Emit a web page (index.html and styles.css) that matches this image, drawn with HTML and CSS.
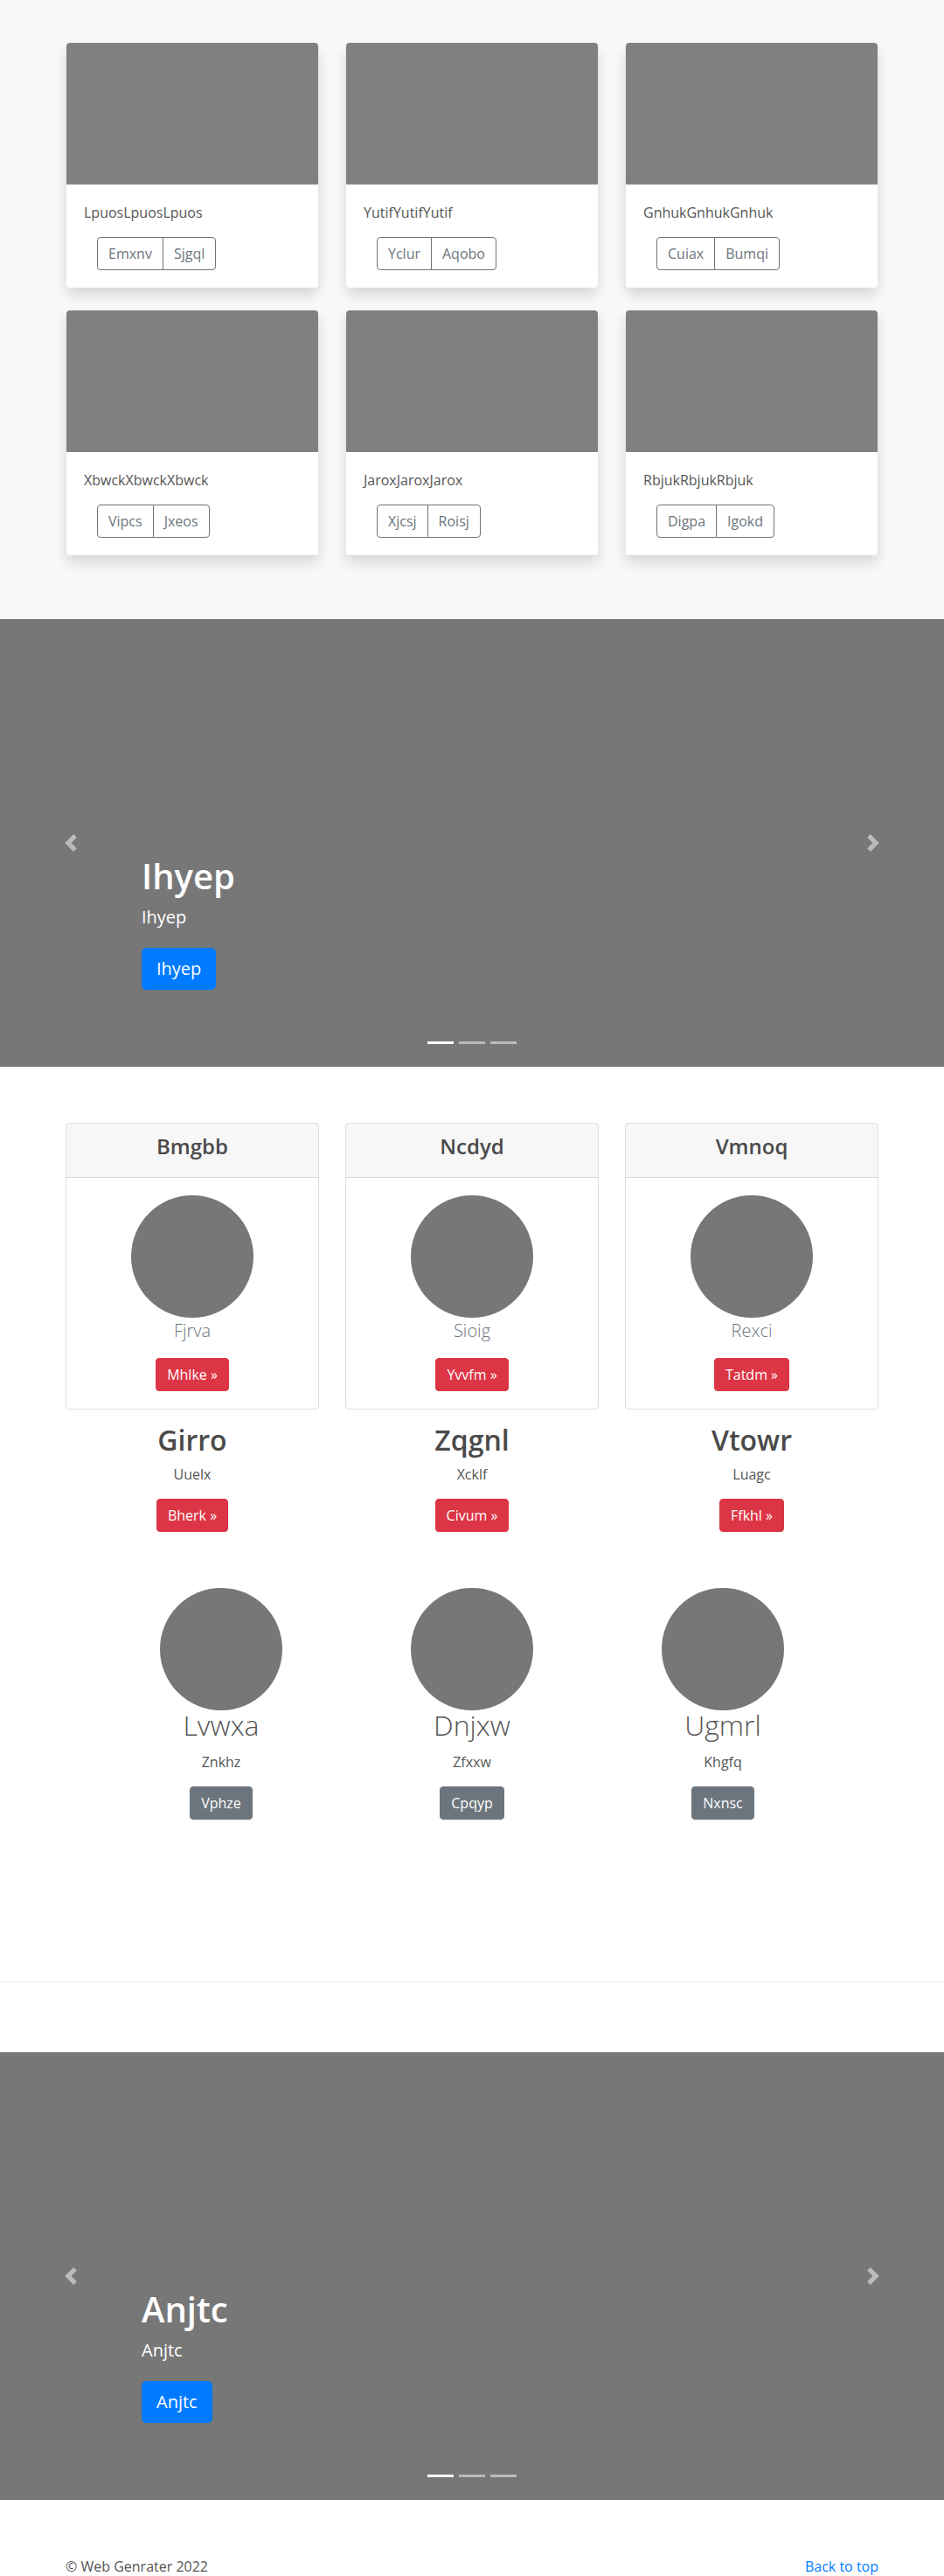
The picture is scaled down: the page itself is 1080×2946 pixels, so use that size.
FILE: index.html
```html
<!DOCTYPE html>
<html lang="en">
<head>
<meta charset="utf-8">
<title>Web Genrater</title>
<link rel="stylesheet" href="styles.css">
</head>
<body>
<main>
  <section class="album">
    <div class="container album-grid">
      <div class="card">
        <div class="card-img"></div>
        <div class="card-body">
          <p class="card-text">LpuosLpuosLpuos</p>
          <div class="btn-group"><a class="btn btn-outline">Emxnv</a><a class="btn btn-outline">Sjgql</a></div>
        </div>
      </div>
      <div class="card">
        <div class="card-img"></div>
        <div class="card-body">
          <p class="card-text">YutifYutifYutif</p>
          <div class="btn-group"><a class="btn btn-outline">Yclur</a><a class="btn btn-outline">Aqobo</a></div>
        </div>
      </div>
      <div class="card">
        <div class="card-img"></div>
        <div class="card-body">
          <p class="card-text">GnhukGnhukGnhuk</p>
          <div class="btn-group"><a class="btn btn-outline">Cuiax</a><a class="btn btn-outline">Bumqi</a></div>
        </div>
      </div>
      <div class="card">
        <div class="card-img"></div>
        <div class="card-body">
          <p class="card-text">XbwckXbwckXbwck</p>
          <div class="btn-group"><a class="btn btn-outline">Vipcs</a><a class="btn btn-outline">Jxeos</a></div>
        </div>
      </div>
      <div class="card">
        <div class="card-img"></div>
        <div class="card-body">
          <p class="card-text">JaroxJaroxJarox</p>
          <div class="btn-group"><a class="btn btn-outline">Xjcsj</a><a class="btn btn-outline">Roisj</a></div>
        </div>
      </div>
      <div class="card">
        <div class="card-img"></div>
        <div class="card-body">
          <p class="card-text">RbjukRbjukRbjuk</p>
          <div class="btn-group"><a class="btn btn-outline">Digpa</a><a class="btn btn-outline">Igokd</a></div>
        </div>
      </div>
    </div>
  </section>

  <section class="carousel">
    <div class="caption">
      <h1 class="caption-title">Ihyep</h1>
      <p class="caption-sub">Ihyep</p>
      <div class="caption-action"><a class="btn btn-lg btn-primary">Ihyep</a></div>
    </div>
    <a class="ctrl ctrl-prev"><svg width="20" height="20" viewBox="0 0 8 8"><path fill="#fff" d="M5.25 0l-4 4 4 4 1.5-1.5L4.25 4l2.5-2.5L5.25 0z"/></svg></a>
    <a class="ctrl ctrl-next"><svg width="20" height="20" viewBox="0 0 8 8"><path fill="#fff" d="M2.75 0l-1.5 1.5L3.75 4l-2.5 2.5L2.75 8l4-4-4-4z"/></svg></a>
    <ol class="indicators"><li class="active"></li><li></li><li></li></ol>
  </section>

  <section class="container pricing">
    <div class="pricing-col">
      <div class="pcard">
        <div class="pcard-header"><h4 class="pcard-title">Bmgbb</h4></div>
        <div class="pcard-body">
          <div class="circle"></div>
          <p class="lead">Fjrva</p>
          <a class="btn btn-danger">Mhlke »</a>
        </div>
      </div>
      <h2 class="feature-title">Girro</h2>
      <p class="feature-text">Uuelx</p>
      <a class="btn btn-danger">Bherk »</a>
    </div>
    <div class="pricing-col">
      <div class="pcard">
        <div class="pcard-header"><h4 class="pcard-title">Ncdyd</h4></div>
        <div class="pcard-body">
          <div class="circle"></div>
          <p class="lead">Sioig</p>
          <a class="btn btn-danger">Yvvfm »</a>
        </div>
      </div>
      <h2 class="feature-title">Zqgnl</h2>
      <p class="feature-text">Xcklf</p>
      <a class="btn btn-danger">Civum »</a>
    </div>
    <div class="pricing-col">
      <div class="pcard">
        <div class="pcard-header"><h4 class="pcard-title">Vmnoq</h4></div>
        <div class="pcard-body">
          <div class="circle"></div>
          <p class="lead">Rexci</p>
          <a class="btn btn-danger">Tatdm »</a>
        </div>
      </div>
      <h2 class="feature-title">Vtowr</h2>
      <p class="feature-text">Luagc</p>
      <a class="btn btn-danger">Ffkhl »</a>
    </div>
  </section>

  <section class="marketing">
    <div class="mk-col">
      <div class="circle"></div>
      <h2 class="mk-title">Lvwxa</h2>
      <p class="mk-text">Znkhz</p>
      <a class="btn btn-secondary">Vphze</a>
    </div>
    <div class="mk-col">
      <div class="circle"></div>
      <h2 class="mk-title">Dnjxw</h2>
      <p class="mk-text">Zfxxw</p>
      <a class="btn btn-secondary">Cpqyp</a>
    </div>
    <div class="mk-col">
      <div class="circle"></div>
      <h2 class="mk-title">Ugmrl</h2>
      <p class="mk-text">Khgfq</p>
      <a class="btn btn-secondary">Nxnsc</a>
    </div>
  </section>

  <hr class="divider">

  <section class="carousel">
    <div class="caption">
      <h1 class="caption-title">Anjtc</h1>
      <p class="caption-sub">Anjtc</p>
      <div class="caption-action"><a class="btn btn-lg btn-primary">Anjtc</a></div>
    </div>
    <a class="ctrl ctrl-prev"><svg width="20" height="20" viewBox="0 0 8 8"><path fill="#fff" d="M5.25 0l-4 4 4 4 1.5-1.5L4.25 4l2.5-2.5L5.25 0z"/></svg></a>
    <a class="ctrl ctrl-next"><svg width="20" height="20" viewBox="0 0 8 8"><path fill="#fff" d="M2.75 0l-1.5 1.5L3.75 4l-2.5 2.5L2.75 8l4-4-4-4z"/></svg></a>
    <ol class="indicators"><li class="active"></li><li></li><li></li></ol>
  </section>
</main>

<footer class="container footer">
  <p class="copy">© Web Genrater 2022</p>
  <a class="back" href="#">Back to top</a>
</footer>
</body>
</html>
```

FILE: styles.css
```css
* { box-sizing: border-box; }

html, body {
  margin: 0;
  padding: 0;
}

body {
  font-family: "Segoe UI", "Open Sans", "Noto Sans", sans-serif;
  font-size: 16px;
  line-height: 1.5;
  color: #555;
  background: #fff;
}

p { margin: 0; }
h1, h2, h4 { margin: 0; }

.container {
  width: 960px;
  margin: 0 auto;
}

/* ---------- buttons ---------- */
.btn {
  display: inline-block;
  font-size: 16px;
  line-height: 24px;
  padding: 6px 12px;
  border: 1px solid transparent;
  border-radius: 4px;
  text-decoration: none;
  text-align: center;
  white-space: nowrap;
  cursor: pointer;
}
.btn-lg {
  font-size: 20px;
  line-height: 30px;
  padding: 8px 16px;
  border-radius: 5px;
}
.btn-primary { background: #007bff; border-color: #007bff; color: #fff; }
.btn-danger { background: #dc3545; border-color: #dc3545; color: #fff; }
.btn-secondary { background: #6c757d; border-color: #6c757d; color: #fff; }
.btn-outline { color: #6c757d; border-color: #6c757d; background: transparent; }

.btn-group { display: inline-flex; margin-left: 15px; }
.btn-group .btn { border-radius: 0; }
.btn-group .btn:first-child { border-radius: 4px 0 0 4px; }
.btn-group .btn:last-child { border-radius: 0 4px 4px 0; margin-left: -1px; }

/* ---------- album ---------- */
.album {
  background: #f8f9fa;
  padding: 49px 0 73px;
}
.album-grid {
  display: grid;
  grid-template-columns: repeat(3, 320px);
  justify-items: center;
  row-gap: 26px;
}
.card {
  width: 288px;
  background: #fff;
  border-radius: 4px;
  overflow: hidden;
  box-shadow: 0 8px 16px rgba(0, 0, 0, 0.15);
}
.card-img {
  height: 162px;
  background: #808080;
}
.card-body { padding: 20px; }
.card-text { margin-bottom: 16px; }

/* ---------- carousel ---------- */
.carousel {
  position: relative;
  height: 512px;
  background: #777;
  display: flex;
  align-items: flex-end;
  padding: 0 15% 88px 15%;
  color: #fff;
}
.caption { display: flex; flex-direction: column; align-items: flex-start; }
.caption-title {
  font-size: 40px;
  line-height: 48px;
  font-weight: 600;
  margin-bottom: 8px;
}
.caption-sub {
  font-size: 20px;
  line-height: 30px;
  margin-bottom: 20px;
}
.caption-action { display: flex; }

.ctrl {
  position: absolute;
  top: 0;
  bottom: 0;
  width: 15%;
  display: flex;
  align-items: center;
  justify-content: center;
  opacity: 0.5;
}
.ctrl svg { display: block; }
.ctrl-prev { left: 0; }
.ctrl-next { right: 0; }

.indicators {
  position: absolute;
  left: 0;
  right: 0;
  bottom: 16px;
  margin: 0;
  padding: 0;
  list-style: none;
  display: flex;
  justify-content: center;
}
.indicators li {
  width: 30px;
  height: 23px;
  margin: 0 3px;
  border-top: 10px solid transparent;
  border-bottom: 10px solid transparent;
  background: #fff;
  background-clip: padding-box;
  opacity: 0.5;
}
.indicators li.active { opacity: 1; }

/* ---------- pricing ---------- */
.pricing {
  margin-top: 64px;
  display: grid;
  grid-template-columns: repeat(3, 320px);
}
.pricing-col {
  padding: 0 15px;
  text-align: center;
}
.pcard {
  border: 1px solid rgba(0, 0, 0, 0.125);
  border-radius: 4px;
  overflow: hidden;
  background: #fff;
  margin-bottom: 16px;
}
.pcard-header {
  background: rgba(0, 0, 0, 0.03);
  border-bottom: 1px solid rgba(0, 0, 0, 0.125);
  padding: 12px 20px;
}
.pcard-title {
  font-size: 24px;
  line-height: 28.8px;
  font-weight: 600;
  margin-bottom: 8px;
  color: #4a4a4a;
}
.pcard-body { padding: 20px; }
.circle {
  width: 140px;
  height: 140px;
  border-radius: 50%;
  background: #777;
  margin: 0 auto;
}
.lead {
  font-size: 20px;
  line-height: 30px;
  font-weight: 300;
  color: #6c757d;
  margin-bottom: 16px;
}
.feature-title {
  font-size: 32px;
  line-height: 38.4px;
  font-weight: 600;
  color: #4a4a4a;
  margin-bottom: 8px;
}
.feature-text { margin-bottom: 16px; }

/* ---------- marketing ---------- */
.marketing {
  width: 861px;
  margin: 64px auto 0;
  padding-bottom: 185px;
  display: grid;
  grid-template-columns: repeat(3, 1fr);
  text-align: center;
}
.mk-title {
  font-size: 32px;
  line-height: 34.4px;
  font-weight: 300;
  margin-bottom: 12px;
}
.mk-text { margin-bottom: 16px; }

.divider {
  margin: 0 0 80px;
  border: 0;
  border-top: 1px solid rgba(0, 0, 0, 0.1);
  height: 0;
}

/* ---------- footer ---------- */
.footer {
  margin-top: 64px;
  padding: 0 15px;
  display: flex;
  justify-content: space-between;
}
.footer .copy { margin-bottom: 16px; }
.back { color: #007bff; text-decoration: none; }
```
